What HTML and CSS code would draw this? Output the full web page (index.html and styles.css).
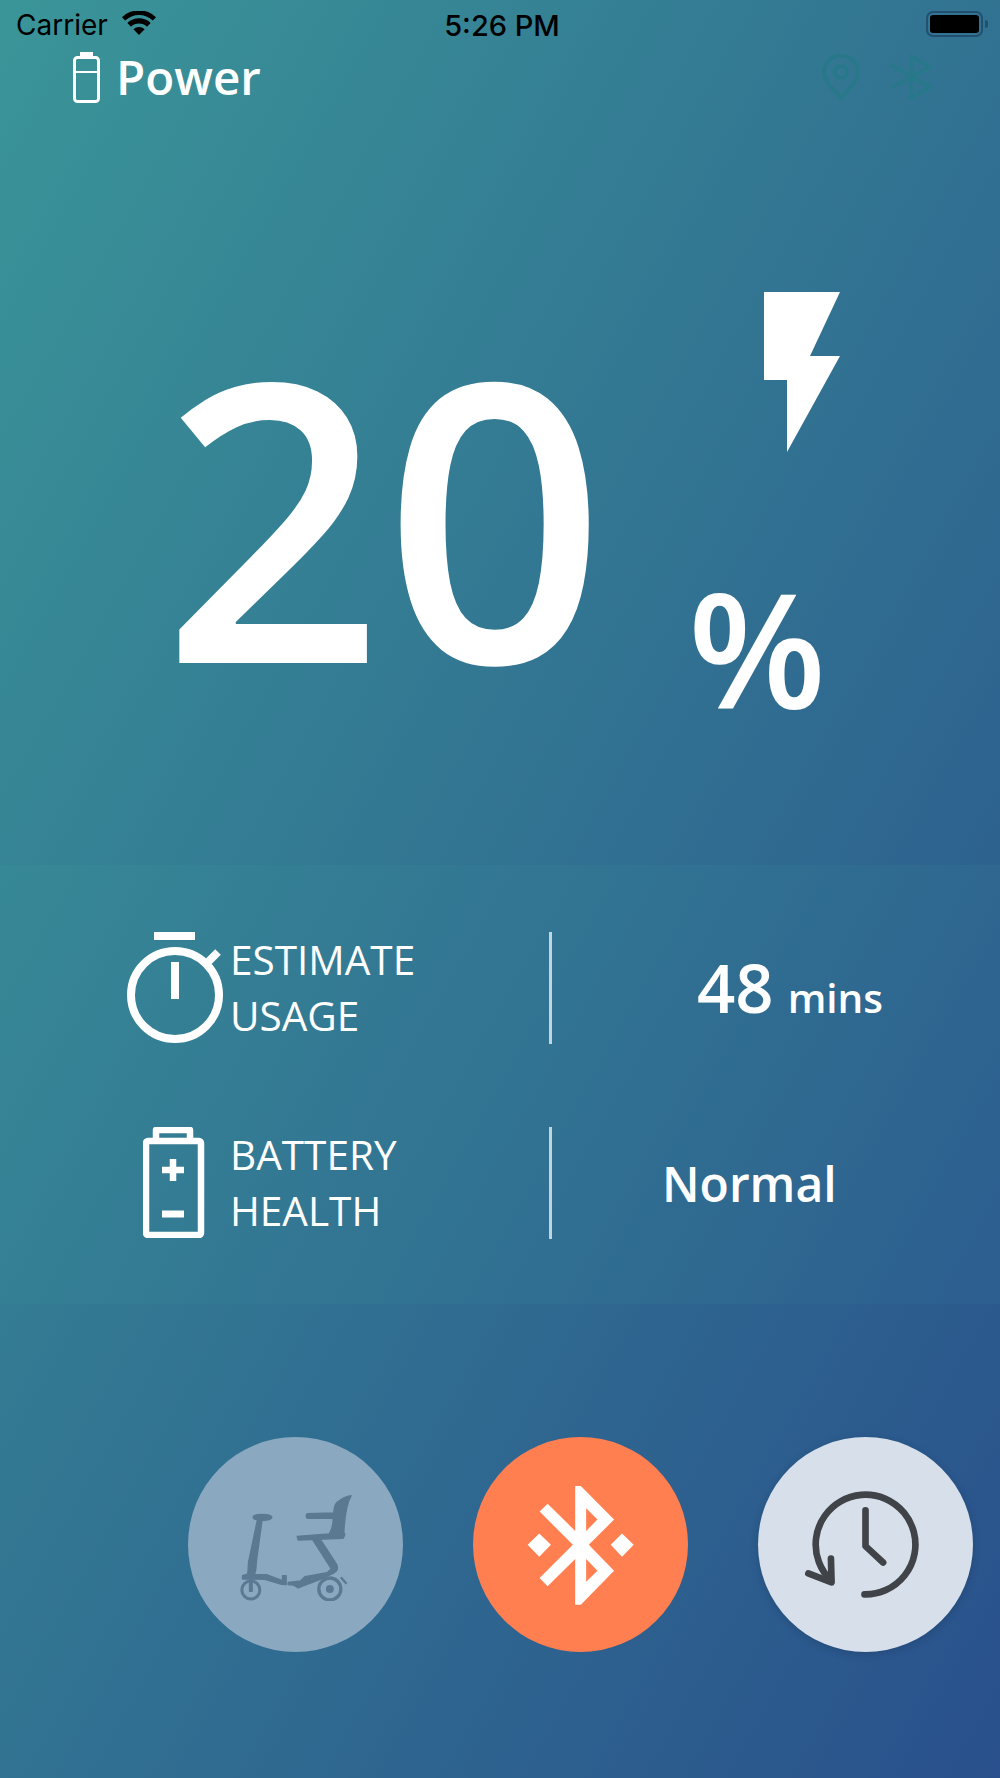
FILE: index.html
```html
<!DOCTYPE html>
<html lang="en">
<head>
    <meta charset="UTF-8">
    <meta name="viewport" content="width=device-width, initial-scale=1.0">
    <title>Power</title>
    <link rel="stylesheet" href="styles.css">
</head>
<body>
    <div class="screen">
        <div class="status-bar">
            <div class="status-left">
                <span class="carrier">Carrier</span>
                <svg class="wifi" viewBox="0 0 34 24" width="34" height="24">
                    <path d="M17 24 L11.4 18.2 A8.2 8.2 0 0 1 22.6 18.2 Z"/>
                    <path d="M9 15.8 L5.4 12 A16.8 16.8 0 0 1 28.6 12 L25 15.8 A11.6 11.6 0 0 0 9 15.8 Z"/>
                    <path d="M3.2 9.6 L0 6.2 A24.5 24.5 0 0 1 34 6.2 L30.8 9.6 A20 20 0 0 0 3.2 9.6 Z"/>
                </svg>
            </div>
            <span class="clock">5:26 PM</span>
            <div class="status-battery">
                <div class="status-battery-body"><div class="status-battery-fill"></div></div>
                <div class="status-battery-tip"></div>
            </div>
        </div>

        <div class="header">
            <div class="title">
                <svg class="title-icon" viewBox="0 0 27 51" width="27" height="51" fill="none" stroke="#fff" stroke-width="3">
                    <path d="M7 0 H20 V6 H7 Z" fill="#fff" stroke="none"/>
                    <rect x="1.5" y="5.5" width="24" height="44" rx="3"/>
                    <path d="M1.5 20 H25.5" stroke-width="2"/>
                </svg>
                <span>Power</span>
            </div>
            <div class="header-icons">
                <svg viewBox="0 0 38 46" width="38" height="46" fill="none" stroke="#27798a" stroke-width="3.6">
                    <path d="M19 44 C11 35 2 27 2 18.5 A17 17 0 0 1 36 18.5 C36 27 27 35 19 44 Z"/>
                    <circle cx="19" cy="18" r="6"/>
                </svg>
                <svg viewBox="0 0 42 46" width="42" height="46" fill="none" stroke="#27798a" stroke-width="3.6">
                    <path d="M1 11 L40 33 L21 44 V2 L40 13 L1 34"/>
                </svg>
            </div>
        </div>

        <div class="hero">
            <div class="charge">20</div>
            <div class="charge-side">
                <svg class="bolt" viewBox="0 0 76 160" width="76" height="160">
                    <path d="M0 0 H76 L46 64 H76 L23 160 V88 H0 Z" fill="#fff"/>
                </svg>
                <div class="percent">%</div>
            </div>
        </div>

        <div class="stats">
            <div class="stat-row">
                <div class="stat-icon">
                    <svg viewBox="0 0 96 111" width="96" height="111" fill="none" stroke="#fff">
                        <path d="M27 4 H68" stroke-width="8"/>
                        <circle cx="48" cy="63" r="44" stroke-width="8"/>
                        <path d="M80 31 L91 20" stroke-width="8"/>
                        <path d="M48 30 V67" stroke-width="8"/>
                    </svg>
                </div>
                <div class="stat-label">ESTIMATE<br>USAGE</div>
                <div class="stat-value stat-value-time"><span class="big">48</span><span class="unit">mins</span></div>
            </div>
            <div class="stat-row">
                <div class="stat-icon">
                    <svg viewBox="0 0 64 111" width="64" height="111" fill="none" stroke="#fff" stroke-width="6.5" stroke-linejoin="round">
                        <path d="M13 14 V3 H47 V14"/>
                        <rect x="3" y="14" width="55" height="94" rx="2"/>
                        <path d="M30 32 V54 M19 43 H41" stroke-width="6.5"/>
                        <path d="M19 87 H41" stroke-width="7"/>
                    </svg>
                </div>
                <div class="stat-label">BATTERY<br>HEALTH</div>
                <div class="stat-value stat-value-health">Normal</div>
            </div>
        </div>

        <div class="actions">
            <div class="action action-scooter">
                <svg viewBox="205 205 344 336" width="115" height="112" fill="#5b7a92" stroke="#5b7a92" stroke-width="4" stroke-linejoin="round">
                    <ellipse cx="278" cy="290" rx="28" ry="9"/>
                    <path d="M263 296 H277 L260 420 L258 445 L254 462 L290 462 L338 480 L338 465 L349 465 L349 492 L335 491 L285 476 L218 475 V465 L234 460 L236 425 Z"/>
                    <circle cx="243" cy="508" r="27" fill="none" stroke-width="9"/>
                    <path d="M239 478 H247 V512 H239 Z"/>
                    <circle cx="480" cy="505" r="33" fill="none" stroke-width="10"/>
                    <circle cx="480" cy="505" r="10"/>
                    <path d="M502 245 C518 232 535 226 544 225 C532 245 525 280 522 335 L525 342 L520 353 L385 358 L382 347 L478 340 C488 325 490 310 490 293 L412 293 C408 288 408 282 412 279 L492 277 C492 265 495 252 502 245 Z"/>
                    <path d="M428 356 L450 354 L500 430 C506 442 502 452 490 458 L442 480 L404 494 L385 502 L370 493 L355 492 V485 L392 481 L405 468 L472 456 L484 444 Z"/>
                    <path d="M513 470 L530 489" fill="none" stroke-width="7"/>
                </svg>
            </div>
            <div class="action action-bluetooth">
                <svg viewBox="200 190 325 365" width="108" height="122" fill="#fff" fill-rule="evenodd">
                    <path d="M345 195 H362 L462 296 L386 372 L462 450 L362 552 H345 V415 L262 497 L238 472 L338 372 L238 272 L262 248 L345 330 Z M378 262 V330 L412 296 Z M378 415 V483 L412 450 Z"/>
                    <path d="M237 338 L272 372 L237 408 L202 372 Z M486 338 L521 372 L486 408 L452 372 Z"/>
                </svg>
            </div>
            <div class="action action-history">
                <svg viewBox="185 203 380 340" width="127" height="113" fill="none" stroke="#404347" stroke-width="20" stroke-linecap="round" stroke-linejoin="round">
                    <path d="M372 523 A150 150 0 1 0 270 480"/>
                    <path d="M203 460 L273 487 L271 415"/>
                    <path d="M375 270 V378 L428 427"/>
                </svg>
            </div>
        </div>
    </div>
</body>
</html>
```

FILE: styles.css
```css
html, body {
    margin: 0;
    padding: 0;
}
body {
    font-family: "Open Sans", sans-serif;
    color: #fff;
}
.screen {
    width: 1000px;
    height: 1778px;
    overflow: hidden;
    background: linear-gradient(to bottom right, #3a9598 0%, #29508c 100%);
}

/* status bar */
.status-bar {
    height: 46px;
    padding: 0 12px 0 16px;
    display: grid;
    grid-template-columns: 1fr auto 1fr;
    align-items: center;
    color: #000;
    font-family: Inter, sans-serif;
    font-size: 28px;
}
.status-left {
    display: flex;
    align-items: center;
    gap: 14px;
}
.carrier {
    padding-top: 4px;
}
.wifi {
    fill: #000;
}
.clock {
    font-size: 29px;
    font-weight: 500;
    padding-top: 4px;
}
.status-battery {
    justify-self: end;
    display: flex;
    align-items: center;
    gap: 2px;
    margin-top: 1px;
}
.status-battery-body {
    width: 49px;
    height: 18px;
    border: 2px solid #22506f;
    border-radius: 7px;
    padding: 2px;
}
.status-battery-fill {
    height: 100%;
    background: #000;
    border-radius: 3px;
}
.status-battery-tip {
    width: 3px;
    height: 8px;
    background: #22506f;
    border-radius: 0 3px 3px 0;
}

/* header */
.header {
    height: 60px;
    box-sizing: border-box;
    padding: 5px 68px 0 73px;
    display: flex;
    justify-content: space-between;
    align-items: flex-start;
}
.title {
    display: flex;
    align-items: center;
    gap: 16px;
    font-size: 47.5px;
    font-weight: 600;
    line-height: 52px;
}
.header-icons {
    display: flex;
    gap: 30px;
    padding-top: 3px;
}

/* big number */
.hero {
    height: 759px;
    box-sizing: border-box;
    padding-left: 162px;
    display: flex;
}
.charge {
    width: 526px;
    flex: none;
    font-size: 388px;
    font-weight: 600;
    line-height: 1;
    padding-top: 213px;
}
.charge-side {
    padding-top: 186px;
}
.bolt {
    display: block;
    margin-left: 76px;
}
.percent {
    font-size: 160px;
    font-weight: 600;
    line-height: 1;
    margin-top: 115px;
}

/* stats band */
.stats {
    height: 439px;
    box-sizing: border-box;
    padding-top: 67px;
    background: rgba(80, 255, 210, 0.035);
    display: flex;
    flex-direction: column;
    gap: 84px;
}
.stat-row {
    height: 111px;
    display: grid;
    grid-template-columns: 127px 103px 319px 1fr;
}
.stat-icon {
    grid-column: 2;
    margin-left: -127px;
    padding-left: 127px;
    width: 96px;
    display: flex;
    justify-content: center;
}
.stat-icon svg {
    display: block;
}
.stat-label {
    font-size: 40.5px;
    font-weight: 400;
    line-height: 56px;
    align-self: center;
}
.stat-value {
    border-left: 3px solid rgba(255, 255, 255, 0.7);
    display: flex;
    font-weight: 600;
}
.stat-value-time {
    padding-left: 145px;
    padding-top: 9px;
    gap: 14px;
    align-items: baseline;
}
.stat-value-health {
    padding-left: 110px;
    align-items: center;
    font-size: 48px;
}
.big {
    font-size: 67px;
}
.unit {
    font-size: 40.5px;
}

/* round buttons */
.actions {
    padding: 133px 28px 0 188px;
    display: flex;
    gap: 70px;
}
.action {
    width: 215px;
    height: 215px;
    border-radius: 50%;
    display: flex;
    align-items: center;
    justify-content: center;
    flex: none;
}
.action-scooter {
    background: #8aa9c0;
}
.action-bluetooth {
    background: #ff7f50;
}
.action-history {
    background: #d6dfea;
    box-shadow: 0 2px 8px rgba(0, 0, 0, 0.15);
}
```
